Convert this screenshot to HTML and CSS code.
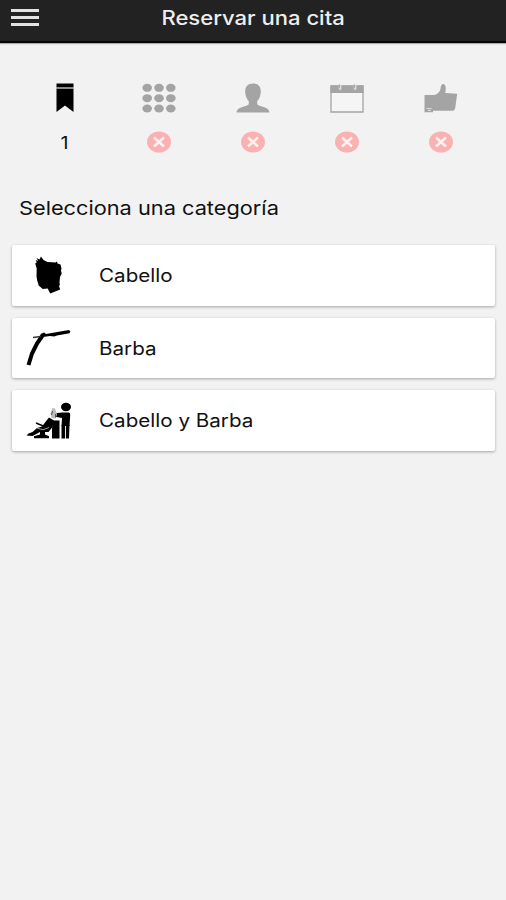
FILE: index.html
```html
<!DOCTYPE html>
<html lang="es">
<head>
<meta charset="utf-8">
<title>Reservar una cita</title>
<link rel="stylesheet" href="styles.css">
</head>
<body>
<header class="bar">
  <div class="menu"><i></i><i></i><i></i></div>
  <h1 class="title"><span class="wide">Reservar una cita</span></h1>
</header>
<main>
  <nav class="steps">
    <div class="step">
      <svg class="icon" viewBox="0 0 36 32"><path d="M9.500 1.500h17v4h-17zM9.500 6.500h17V30L18 23.500 9.500 30z" fill="#000"/><path d="M9.500 6h17" stroke="#999" stroke-width="1"/></svg>
      <span class="number">1</span>
    </div>
    <div class="step">
      <svg class="icon" viewBox="0 0 36 32"><g fill="#a4a4a4"><ellipse cx="6.200" cy="5.800" rx="4.800" ry="4"/><ellipse cx="18" cy="5.800" rx="4.800" ry="4"/><ellipse cx="29.800" cy="5.800" rx="4.800" ry="4"/><ellipse cx="6.200" cy="16.200" rx="4.800" ry="4"/><ellipse cx="18" cy="16.200" rx="4.800" ry="4"/><ellipse cx="29.800" cy="16.200" rx="4.800" ry="4"/><ellipse cx="6.200" cy="26.500" rx="4.800" ry="4"/><ellipse cx="18" cy="26.500" rx="4.800" ry="4"/><ellipse cx="29.800" cy="26.500" rx="4.800" ry="4"/></g></svg>
      <svg class="badge" viewBox="0 0 24 22"><ellipse cx="12" cy="11" rx="12" ry="10.600" fill="#fab1b1"/><path d="M7 6.500l10 9M17 6.500l-10 9" stroke="#fdf0f0" stroke-width="2.600"/></svg>
    </div>
    <div class="step">
      <svg class="icon" viewBox="0 0 36 32"><path d="M18 1.500C12.500 1.500 10 5 10.200 10c.2 4 1.600 7 3.600 9.200v3C11 25 2 24.500 1.500 30.500h33C34 24.500 25 25 22.200 22.200v-3c2-2.200 3.400-5.200 3.600-9.200C26 5 23.500 1.500 18 1.500z" fill="#a4a4a4"/></svg>
      <svg class="badge" viewBox="0 0 24 22"><ellipse cx="12" cy="11" rx="12" ry="10.600" fill="#fab1b1"/><path d="M7 6.500l10 9M17 6.500l-10 9" stroke="#fdf0f0" stroke-width="2.600"/></svg>
    </div>
    <div class="step">
      <svg class="icon" viewBox="0 0 36 32"><path d="M2 4h32v26H2z" fill="#f5f5f5" stroke="#a4a4a4" stroke-width="1.300"/><path d="M1.400 3.500h33.200v7.500H1.400z" fill="#a4a4a4"/><path d="M11 2.500v5M26 2.500v5" stroke="#f2f2f2" stroke-width="2.500"/><path d="M10.500 2.500v4M25.500 2.500v4" stroke="#a4a4a4" stroke-width="1.500"/></svg>
      <svg class="badge" viewBox="0 0 24 22"><ellipse cx="12" cy="11" rx="12" ry="10.600" fill="#fab1b1"/><path d="M7 6.500l10 9M17 6.500l-10 9" stroke="#fdf0f0" stroke-width="2.600"/></svg>
    </div>
    <div class="step">
      <svg class="icon" viewBox="0 0 36 32"><path d="M1.500 13h8c3 .5 6-1.500 7.500-4.500.8-2 .8-6.500 3-6.500 3 0 3.300 5 2.200 9l12 .8-2 14.200c-.4 2-1.500 2.800-3.500 2.800H10v1.500H1.500z" fill="#a4a4a4"/><path d="M3.500 26.500h5M5 28.500h3" stroke="#ddd" stroke-width="1.200"/></svg>
      <svg class="badge" viewBox="0 0 24 22"><ellipse cx="12" cy="11" rx="12" ry="10.600" fill="#fab1b1"/><path d="M7 6.500l10 9M17 6.500l-10 9" stroke="#fdf0f0" stroke-width="2.600"/></svg>
    </div>
  </nav>
  <h2 class="heading"><span class="wide">Selecciona una categoría</span></h2>
  <ul class="list">
    <li class="card">
      <svg class="pic" viewBox="0 0 50 46"><path d="M13.500 6l3 1.500 1.500-3 2.500 3.500 4 2 8 .5 1.500-1 .5 2 3 1 1 4-.5 2 .7 3-1.700 3.500-.5 5 .3 3-.8 1 1.200 3.500-10 4-2.500-5-5 .5-4-3.500-1.500-5-.7-4 .2-8-1.500-5 1.500-1-1-2.500 2.500 1z" fill="#000"/></svg>
      <span class="wide">Cabello</span>
    </li>
    <li class="card">
      <svg class="pic" viewBox="0 0 50 46"><path d="M19.500 10.500L14 18.500 9 28.500 5.500 40" fill="none" stroke="#000" stroke-width="4"/><path d="M10 12.500l8-1" stroke="#333" stroke-width="1.300"/><path d="M17.500 9l3.500-1.500 2 1.500L46 5l1.500 1.500L46.500 8.300 34 10.500 31 11.500l-4-.5-7 1z" fill="#000"/></svg>
      <span class="wide">Barba</span>
    </li>
    <li class="card">
      <svg class="pic" viewBox="0 0 50 46"><ellipse cx="43" cy="9" rx="5" ry="4.200"/><path d="M31 15.500l8-1h7q1.500.5 1.200 2.500l-.7 11H38.500l.5-8-8-1.500z"/><path d="M38.500 27h3.600v13.500h-3.600zM43 27h3.500l-.5 13.500h-3z"/><path d="M30 22.500h6.500V40.500H29V31z"/><path d="M29.500 10l-2 5.500 1 4.500 4 .5 1.500-4-2-6z" fill="#bbb"/><path d="M29.500 13l-1 4M32.500 16v3.500" stroke="#555"/><path d="M26 19.500l5 3-1.500 6.500-4 5H17l-7.500 4-6-.5 2-2 4-1.500 4.500-4 5-1.500 3-4z"/><path d="M13 25l9.500 4 5-3" stroke="#000" stroke-width="1.500" fill="none"/><path d="M14 30l6 1.800 6-2.300" stroke="#ccc" stroke-width=".8" fill="none"/><path d="M17 32.500h5v4l4 1.800v2H11v-2l6-1.800z"/></svg>
      <span class="wide">Cabello y Barba</span>
    </li>
  </ul>
</main>
</body>
</html>
```
FILE: styles.css
```css
* { box-sizing: border-box; }
body {
  margin: 0;
  min-height: 900px;
  background: #f2f2f2;
  color: #111;
  font-family: Inter, "Liberation Sans", sans-serif;
}
.bar {
  display: grid;
  grid-template-columns: 51px 1fr 51px;
  height: 43px;
  background: #222;
  border-bottom: 2px solid #050505;
  box-shadow: 0 1px 1px #aaa;
}
.menu {
  display: flex;
  flex-direction: column;
  gap: 4.200px;
  padding: 8.500px 0 0 11.400px;
}
.menu i { width: 28px; height: 3px; background: #e2e2e2; }
.title {
  margin: 0;
  padding-top: 5.500px;
  font-size: 19.500px;
  line-height: 24px;
  font-weight: 500;
  text-align: center;
  color: #eee;
}
.wide {
  display: inline-block;
  transform: scaleX(1.145);
  transform-origin: left;
  white-space: nowrap;
}
.title .wide { transform: scaleX(1.130); transform-origin: center; }
.steps {
  display: grid;
  grid-template-columns: repeat(5, 1fr);
  padding: 39px 18.500px 0;
}
.step { display: flex; flex-direction: column; align-items: center; gap: 17px; }
.icon { width: 36px; height: 32px; }
.badge { width: 24px; height: 22px; }
.number { font-size: 17px; line-height: 22px; padding-top: 1px; margin: 0 2px -1px 0; transform: scaleX(1.160); }
.heading {
  margin: 43px 0 0 18.500px;
  font-size: 19px;
  line-height: 26px;
  font-weight: 400;
}
.list {
  list-style: none;
  margin: 23px 11.500px 0;
  padding: 0;
  display: grid;
  gap: 12px;
}
.card {
  display: flex;
  align-items: center;
  height: 60.700px;
  padding-left: 11px;
  background: #fff;
  border-radius: 2px;
  box-shadow: 0 1px 3px rgba(0,0,0,.32);
  font-size: 18px;
}
.pic { width: 50px; height: 46px; margin-right: 26.500px; }
```
